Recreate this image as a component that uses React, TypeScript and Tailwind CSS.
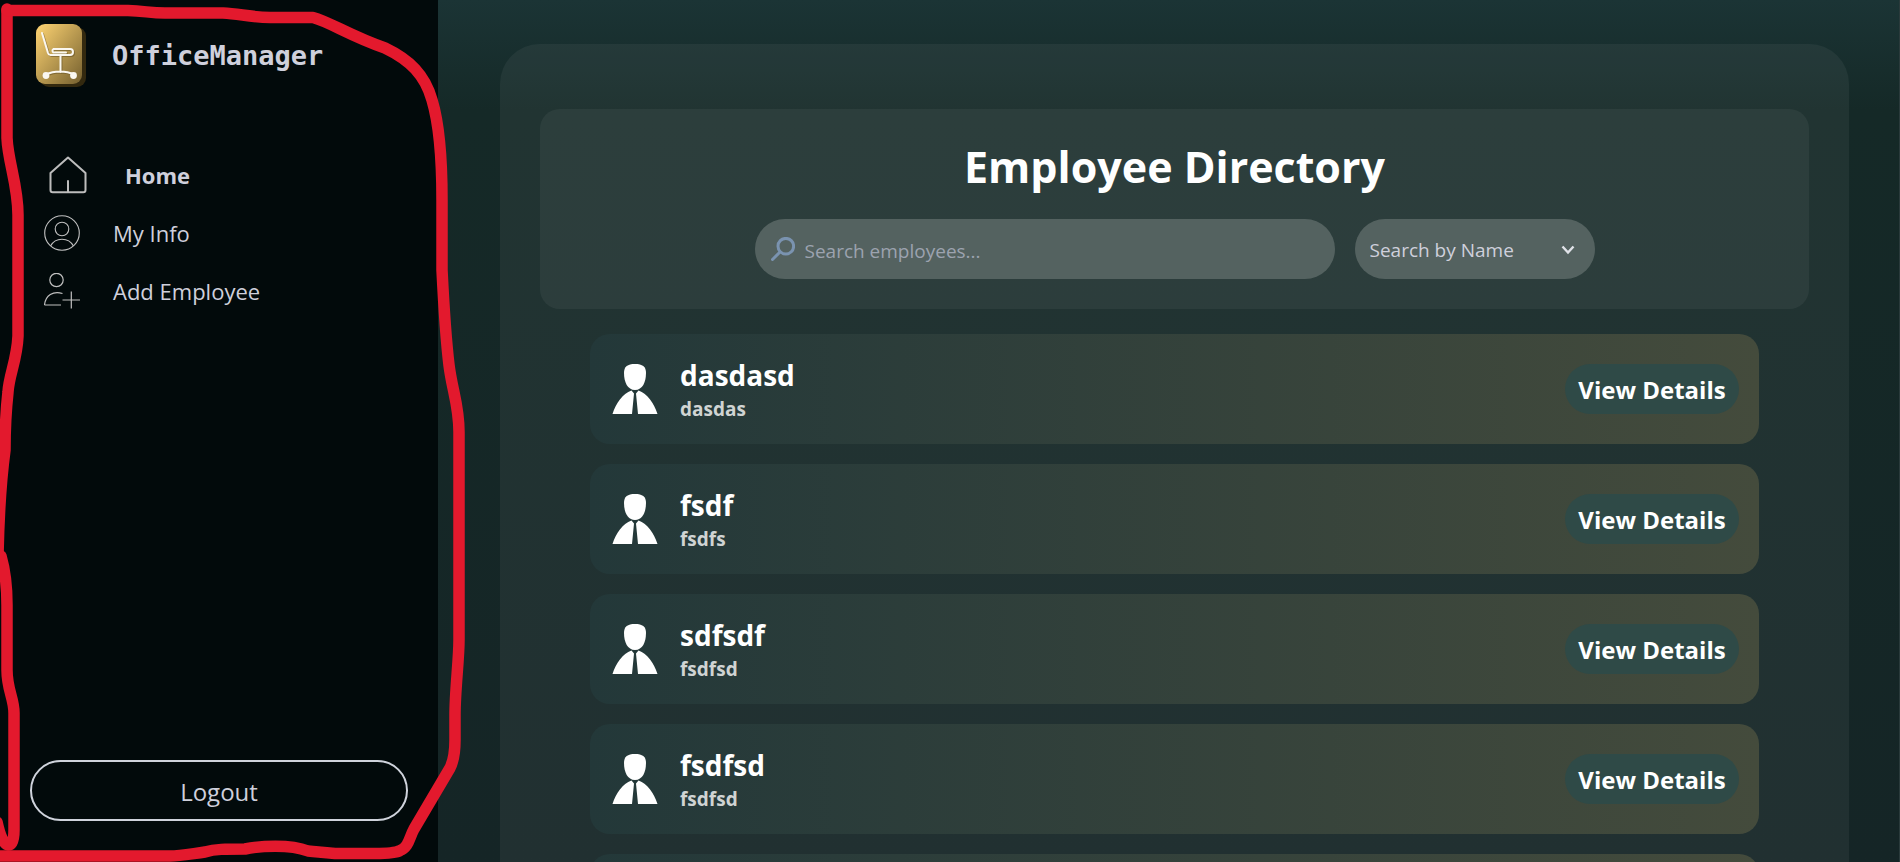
const people = [
  { name: "dasdasd", role: "dasdas" },
  { name: "fsdf", role: "fsdfs" },
  { name: "sdfsdf", role: "fsdfsd" },
  { name: "fsdfsd", role: "fsdfsd" },
  { name: "fsdfsd", role: "fsdfsd" },
];

function Logo() {
  return (
    <svg viewBox="0 0 50 63" className="h-[63px] w-[50px] shrink-0" aria-hidden="true">
      <defs>
        <linearGradient id="gold" x1="0" y1="0" x2="1" y2="1">
          <stop offset="0" stopColor="#ffd573" />
          <stop offset="1" stopColor="#75602f" />
        </linearGradient>
      </defs>
      <rect x="4" y="3" width="46" height="60" rx="9" fill="#33290f" />
      <rect width="46" height="60" rx="9" fill="url(#gold)" />
      <g fill="none" stroke="#5c4a20" strokeOpacity=".5" strokeWidth="2" strokeLinecap="round" transform="translate(1 1)">
        <path d="M6 9l6 20c.5 1.500 1 2 2.500 2H34a3 3 0 0 0 0-6H17.500a2 2 0 0 0 0 3.500H30M24.500 31v17M10 50.500c8-4 20-4 28 0" />
      </g>
      <path
        d="M6 9l6 20c.5 1.500 1 2 2.500 2H34a3 3 0 0 0 0-6H17.500a2 2 0 0 0 0 3.500H30M24.500 31v17M10 50.500c8-4 20-4 28 0"
        fill="none"
        stroke="#faf7f0"
        strokeWidth="2"
        strokeLinecap="round"
      />
      <circle cx="10" cy="51.500" r="3.400" fill="#faf7f0" />
      <circle cx="37.500" cy="51.500" r="3.400" fill="#faf7f0" />
    </svg>
  );
}

function HomeIcon() {
  return (
    <svg viewBox="0 0 38 38" className="size-[38px] shrink-0" fill="none" stroke="#bdbdbd" strokeWidth="2" strokeLinejoin="round" strokeLinecap="round" aria-hidden="true">
      <path d="M19 1.500L1.500 17v17c0 1.300.8 2.200 2.200 2.200h30.600c1.400 0 2.200-.9 2.200-2.200V17zM19 25v11" />
    </svg>
  );
}

function InfoIcon() {
  return (
    <svg viewBox="0 0 36 36" className="size-9 shrink-0" fill="none" stroke="#c0c0c0" strokeWidth="1.100" aria-hidden="true">
      <circle cx="18" cy="18" r="17.300" />
      <circle cx="18" cy="14" r="6.800" />
      <path d="M6.500 31c5-9 18-9 23 0" />
    </svg>
  );
}

function AddIcon() {
  return (
    <svg viewBox="0 0 36 36" className="size-9 shrink-0" fill="none" stroke="#c0c0c0" strokeWidth="1.200" aria-hidden="true">
      <circle cx="12.500" cy="7" r="6.700" />
      <path d="M18.500 20.500c-9.500-3-17 2-18 11.500M.5 32H17" />
      <path d="M18.500 27H36M27.300 18.500v17" />
    </svg>
  );
}

function PersonIcon() {
  return (
    <svg viewBox="0 0 46 50" className="h-[50px] w-[46px] shrink-0" fill="#fff" aria-hidden="true">
      <path d="M12 9C12 2.500 15.500 0 23 0s11 2.500 11 9c0 9-3.500 17-11 17S12 18 12 9z" />
      <path d="M19.500 26.500l2.500 3L20 50H.5C4 39 10.500 30 19.500 26.500zM26.500 26.500C35.500 30 42 39 45.500 50H26l-2-20.500z" />
    </svg>
  );
}

function Annotation() {
  return (
    <svg viewBox="0 0 480 862" className="pointer-events-none absolute top-0 left-0 h-[862px] w-[480px]" fill="none" stroke="#e3192d" strokeWidth="11.500" strokeLinejoin="round" strokeLinecap="round" aria-hidden="true">
      <path d="M7 9V138C8 162 18 185 18 215V336C17 360 9 375 8 392C6 410 5 430 5 450C1 480 -1 505 -2 556" />
      <path d="M1 556C5 570 7 590 7 605V670C7 690 14 698 14 713V830C14 840 12 845 8 845C4 845 0 836 -3 822" />
      <path d="M7 10.500H128C145 11 150 13 165 13H223C240 14 250 17 270 17.500H313C330 22 350 36 385 48C410 60 425 75 432 100C441 130 442 170 442 200V270C444 310 446 340 449 365C452 390 459 405 459 432V640C459 660 455 690 455 715V740C455 750 454 760 450 768L414 829C409 838 409 847 400 850.500Q395 853.500 375 853.500H335C320 852 318 852 308 851C290 844 260 846 245 849C225 849 215 849 205 852C190 854 180 856 170 856H0" />
    </svg>
  );
}

export default function App() {
  return (
    <div className="relative flex h-screen overflow-hidden bg-[#152625] font-['Open_Sans','Noto_Sans',sans-serif] text-[#cfd0dc]">
      <aside className="flex w-[438px] shrink-0 flex-col bg-[#020a0b] px-[30px] pt-6 pb-[41px]">
        <div className="flex items-center gap-[26px] pl-1.5">
          <Logo />
          <span className="pt-0.5 font-['DejaVu_Sans_Mono',monospace] text-[27px] font-bold">OfficeManager</span>
        </div>
        <nav className="mt-[59px] flex flex-col text-[22px]">
          <a href="#home" className="flex h-[58px] items-center gap-[38px] pl-[19px] font-bold">
            <HomeIcon />
            Home
          </a>
          <a href="#info" className="flex h-[58px] items-center gap-[33px] pl-3.5">
            <InfoIcon />
            My Info
          </a>
          <a href="#add" className="flex h-[58px] items-center gap-[33px] pl-3.5">
            <AddIcon />
            Add Employee
          </a>
        </nav>
        <button type="button" className="mt-auto h-[61px] rounded-full border-2 border-[#cfd3dc] pt-0.5 text-[24px]">
          Logout
        </button>
      </aside>

      <main className="min-w-0 flex-1 overflow-y-auto border-r border-[#2a3a3b] bg-linear-to-b from-[#1b3435] via-[#152927] via-[110px] to-[#152526] px-[50px] pt-11 pl-[62px] [scrollbar-width:none]">
        <div className="rounded-t-[40px] bg-white/5 px-10 pt-[65px] pb-10">
          <header className="flex h-[200px] flex-col items-center rounded-[20px] bg-white/5 pt-7">
            <h1 className="text-[43px] leading-[60px] font-bold text-white">Employee Directory</h1>
            <div className="mt-[22px] flex gap-5">
              <div className="relative">
                <input
                  type="text"
                  aria-label="Search employees"
                  placeholder="Search employees..."
                  className="h-[60px] w-[580px] rounded-full bg-[#546260] pt-1 pr-5 pl-[50px] text-[19px] outline-none placeholder:text-[#9ca3af]"
                />
                <svg viewBox="0 0 24 24" className="pointer-events-none absolute top-[18px] left-4 size-6" fill="none" stroke="#7a93b0" strokeLinecap="round" aria-hidden="true">
                  <circle cx="14.800" cy="9.200" r="7.800" strokeWidth="3" />
                  <path d="M9 15l-7.500 7.500" strokeWidth="3" />
                </svg>
              </div>
              <div className="relative">
                <select aria-label="Search by" className="h-[60px] w-[240px] appearance-none rounded-full bg-[#546260] pt-0.5 pl-[15px] text-[19px] outline-none">
                  <option>Search by Name</option>
                </select>
                <svg viewBox="0 0 14 14" className="pointer-events-none absolute top-6 right-5 size-3.5" fill="none" stroke="#e0e2e8" strokeWidth="2.400" aria-hidden="true">
                  <path d="M1.500 3.500L7 9.500l5.500-6" />
                </svg>
              </div>
            </div>
          </header>

          <ul className="mt-[25px] flex flex-col gap-5 px-[50px]">
            {people.map((person, i) => (
              <li key={i} className="flex h-[110px] items-center rounded-[20px] bg-linear-to-r from-[#233839] to-[#444b3c] pr-5 pl-[22px]">
                <PersonIcon />
                <div className="ml-[22px] flex-1 pt-1 font-bold">
                  <h2 className="text-[28px] leading-9 text-white">{person.name}</h2>
                  <p className="text-[19px] leading-8 text-[#d0d4d3]">{person.role}</p>
                </div>
                <button type="button" className="h-[50px] w-[174px] rounded-full bg-[#2f4a47] pt-0.5 text-[24px] font-bold text-white">
                  View Details
                </button>
              </li>
            ))}
          </ul>
        </div>
      </main>
      <Annotation />
    </div>
  );
}
